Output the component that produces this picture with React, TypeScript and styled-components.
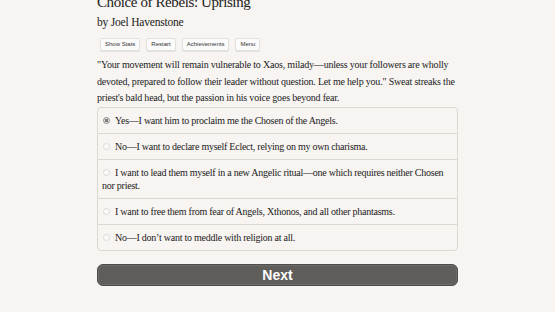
import React, { useState } from "react";
import styled, { createGlobalStyle } from "styled-components";

const GlobalStyle = createGlobalStyle`
  html, body {
    margin: 0;
    padding: 0;
    background: #f7f4f1;
  }
  body {
    font-family: "Liberation Serif", "Times New Roman", serif;
    color: #222;
    overflow: hidden;
  }
`;

const Page = styled.div`
  width: 361px;
  margin: 0 auto;
`;

const Title = styled.h1`
  margin: -7px 0 0;
  font-size: 15px;
  font-weight: normal;
  letter-spacing: -0.4px;
  line-height: 18px;
  color: #222;
`;

const Byline = styled.h2`
  margin: 4px 0 0;
  font-size: 11.5px;
  font-weight: normal;
  letter-spacing: -0.2px;
  line-height: 14px;
  color: #222;
`;

const ButtonRow = styled.div`
  display: flex;
  gap: 6px;
  margin: 9px 0 0 3px;
`;

const SmallButton = styled.button`
  font-family: "Liberation Sans", Arial, sans-serif;
  font-size: 6px;
  line-height: 9px;
  padding: 1px 4px;
  background: #fbfbfb;
  color: #333;
  border: 1px solid #e2e0dd;
  border-radius: 2px;
  box-shadow: 0 1px 1px rgba(0, 0, 0, 0.08);
`;

const Passage = styled.p`
  margin: 6px 0 0;
  font-size: 10px;
  letter-spacing: -0.2px;
  line-height: 16.5px;
  color: #222;
`;

const ChoiceBox = styled.div`
  margin-top: 0;
  border: 1px solid #dcd9d5;
  border-radius: 4px;
  background: #f7f4f1;
  overflow: hidden;
`;

const ChoiceRow = styled.label<{ $first?: boolean }>`
  display: block;
  padding: 6px 6px 5.5px 4px;
  border-top: ${(p) => (p.$first ? "none" : "1px solid #dcd9d5")};
  font-size: 10px;
  letter-spacing: -0.25px;
  line-height: 13.5px;
  color: #222;
  cursor: pointer;
`;

const Radio = styled.span<{ $checked?: boolean }>`
  display: inline-block;
  width: 7px;
  height: 7px;
  margin: 0 5px 0 1px;
  border-radius: 50%;
  box-sizing: border-box;
  vertical-align: 0px;
  border: 1px solid ${(p) => (p.$checked ? "#8d8b88" : "#dcdad6")};
  background: ${(p) =>
    p.$checked
      ? "radial-gradient(circle, #7c7a77 0 40%, #e8e6e3 45% 100%)"
      : "#fbfaf9"};
`;

const NextButton = styled.button`
  display: block;
  width: 100%;
  height: 22px;
  margin-top: 13px;
  background: #5f5e5b;
  color: #ffffff;
  border: 1px solid #4e4d4a;
  border-radius: 6px;
  font-family: "Liberation Sans", Arial, sans-serif;
  font-weight: bold;
  font-size: 14px;
  line-height: 20px;
  padding: 0;
  box-shadow: inset 0 0 0 1px #6c6b68;
`;

const choices = [
  "Yes\u2014I want him to proclaim me the Chosen of the Angels.",
  "No\u2014I want to declare myself Eclect, relying on my own charisma.",
  "I want to lead them myself in a new Angelic ritual\u2014one which requires neither Chosen nor priest.",
  "I want to free them from fear of Angels, Xthonos, and all other phantasms.",
  "No\u2014I don\u2019t want to meddle with religion at all.",
];

export default function App() {
  const [selected, setSelected] = useState(0);
  return (
    <>
      <GlobalStyle />
      <Page>
        <Title>Choice of Rebels: Uprising</Title>
        <Byline>by Joel Havenstone</Byline>
        <ButtonRow>
          <SmallButton>Show Stats</SmallButton>
          <SmallButton>Restart</SmallButton>
          <SmallButton>Achievements</SmallButton>
          <SmallButton>Menu</SmallButton>
        </ButtonRow>
        <Passage>
          "Your movement will remain vulnerable to Xaos, milady—unless your
          followers are wholly devoted, prepared to follow their leader without
          question. Let me help you." Sweat streaks the priest's bald head, but
          the passion in his voice goes beyond fear.
        </Passage>
        <ChoiceBox>
          {choices.map((c, i) => (
            <ChoiceRow key={i} $first={i === 0} onClick={() => setSelected(i)}>
              <Radio $checked={selected === i} />
              {c}
            </ChoiceRow>
          ))}
        </ChoiceBox>
        <NextButton>Next</NextButton>
      </Page>
    </>
  );
}
